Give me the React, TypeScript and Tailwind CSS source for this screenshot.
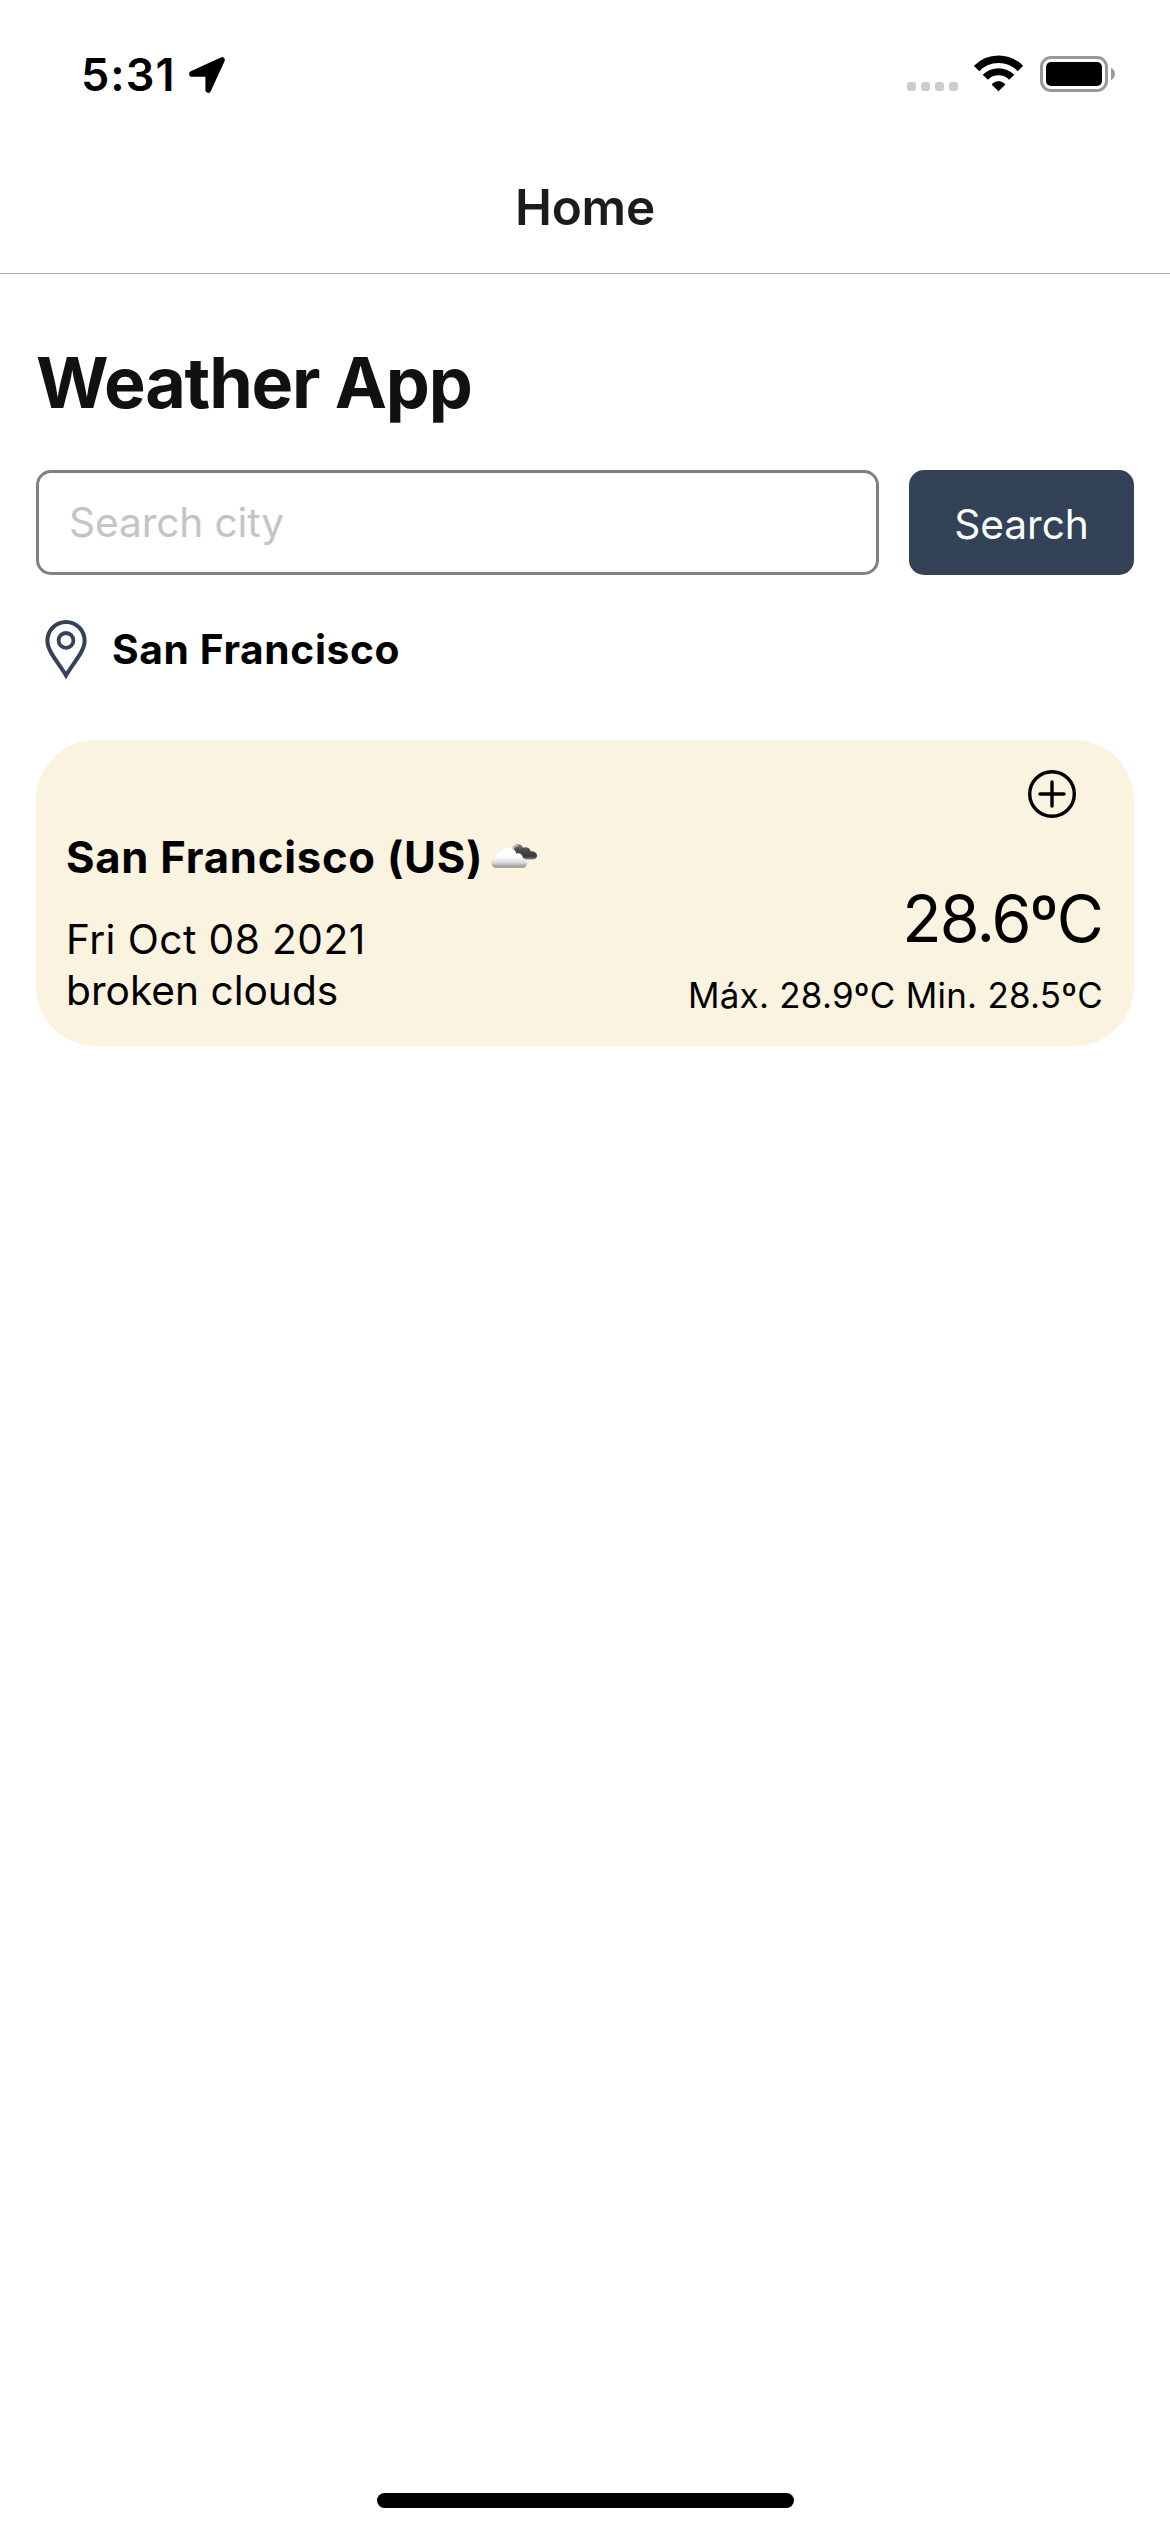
import React from "react";

function LocationArrow() {
  return (
    <svg width="36" height="36" viewBox="0 0 36 36" className="block">
      <path
        d="M2.9 16.9 L33 3 L19.2 33 V16.9 Z"
        fill="#000"
        stroke="#000"
        strokeWidth="5.6"
        strokeLinejoin="round"
      />
    </svg>
  );
}

function WifiIcon() {
  return (
    <svg width="49" height="37" viewBox="0 0 49 37" className="block" fill="none">
      <path d="M2.6 13.5 A30.4 30.4 0 0 1 46.4 13.5" stroke="#000" strokeWidth="7.6" />
      <path d="M11.3 22.3 A18.5 18.5 0 0 1 37.7 22.3" stroke="#000" strokeWidth="7.2" />
      <path
        d="M18 29.4 Q24.5 23.8 31 29.4 L24.5 35.8 Z"
        fill="#000"
        stroke="#000"
        strokeWidth="1"
        strokeLinejoin="round"
      />
    </svg>
  );
}

function Battery() {
  return (
    <div className="flex items-center">
      <div className="h-9 w-[68px] rounded-[11px] border-[3px] border-[#999] p-[3px]">
        <div className="h-full w-full rounded-[5px] bg-black" />
      </div>
      <svg width="4" height="12" viewBox="0 0 4 12" className="ml-[3px] block">
        <path d="M0 0 C2.6 1 4 3.4 4 6 C4 8.6 2.6 11 0 12 Z" fill="#999" />
      </svg>
    </div>
  );
}

function PinIcon() {
  return (
    <svg width="42" height="60" viewBox="0 0 42 60" className="block" fill="none" stroke="#334257">
      <path
        d="M21 2 C10.6 2 2.4 10.4 2.4 20.8 C2.4 31.5 13.5 42.5 21 55.4 C28.5 42.5 39.6 31.5 39.6 20.8 C39.6 10.4 31.4 2 21 2 Z"
        strokeWidth="4"
      />
      <circle cx="21" cy="20.4" r="7.4" strokeWidth="3.8" />
    </svg>
  );
}

function PlusIcon() {
  return (
    <svg width="48" height="48" viewBox="0 0 48 48" className="block" fill="none" stroke="#000">
      <circle cx="24" cy="24" r="22.3" strokeWidth="3.4" />
      <path d="M24 12 V36 M12 24 H36" strokeWidth="3.4" strokeLinecap="round" />
    </svg>
  );
}

function BrokenClouds() {
  return (
    <svg width="46" height="24" viewBox="0 0 46 24" className="block">
      <defs>
        <linearGradient id="light" x1="0" y1="3" x2="0" y2="24" gradientUnits="userSpaceOnUse">
          <stop offset="0" stopColor="#ffffff" />
          <stop offset="0.5" stopColor="#fbfbfb" />
          <stop offset="0.75" stopColor="#d9d9d9" />
          <stop offset="0.9" stopColor="#a6a6a6" />
          <stop offset="1" stopColor="#8a8a8a" />
        </linearGradient>
        <linearGradient id="dark" x1="0" y1="0" x2="0" y2="15.5" gradientUnits="userSpaceOnUse">
          <stop offset="0" stopColor="#8c8c8c" />
          <stop offset="0.35" stopColor="#4c4c4c" />
          <stop offset="0.8" stopColor="#3a3a3a" />
          <stop offset="1" stopColor="#8a8a8a" />
        </linearGradient>
      </defs>
      <path
        d="M21 6 C21.6 2 25 0 28 0.4 C30.2 0.6 31.6 2 32.2 3.8 C35 2.6 39 3.6 39.8 7.4 C43 7 46 8.8 46 11.4 C46 14 44.2 15.4 42 15.4 H27 Z"
        fill="url(#dark)"
      />
      <path d="M21.6 6.4 C22.4 3.4 24.6 1.6 27 1.6" stroke="#c9c6bd" strokeWidth="1.4" fill="none" />
      <path
        d="M5.6 23.8 C2.4 23.8 0.3 21.4 0.3 18.4 C0.3 15.4 2.4 13.2 5 12.8 C4.8 9.4 7 7.6 10 7.6 C11.4 4.6 14 3.4 17 3.6 C21.4 3.8 24.6 6 25.2 9.6 C28.8 8.6 32 10.6 31.8 14.2 C34.4 14.6 36.2 16.4 36.2 19 C36.2 21.8 34.2 23.8 31.4 23.8 Z"
        fill="url(#light)"
      />
    </svg>
  );
}

function StatusBar() {
  return (
    <div className="flex h-[141px] items-start justify-between pt-[55px] pr-[55px] pl-[81px]">
      <div className="flex">
        <span className="w-[108px] text-[45px] leading-[39px] font-semibold tracking-[1.04px]">5:31</span>
        <div className="pt-0.5">
          <LocationArrow />
        </div>
      </div>
      <div className="flex">
        <div className="mt-[27px] mr-4 flex gap-[5px]">
          <div className="size-[9px] rounded-[3px] bg-[#cccccc]" />
          <div className="size-[9px] rounded-[3px] bg-[#cccccc]" />
          <div className="size-[9px] rounded-[3px] bg-[#cccccc]" />
          <div className="size-[9px] rounded-[3px] bg-[#cccccc]" />
        </div>
        <WifiIcon />
        <div className="mt-px ml-[17px]">
          <Battery />
        </div>
      </div>
    </div>
  );
}

function WeatherCard() {
  return (
    <section className="mt-[60px] h-[306px] rounded-[60px] bg-[#faf3e0] p-[30px]">
      <div className="flex h-[61px] justify-end pr-7">
        <PlusIcon />
      </div>
      <div className="flex h-[185px] items-end justify-between">
        <div>
          <div className="mb-[29px] flex h-[54px] items-center">
            <h2 className="text-[43.6px] leading-[54px] font-bold tracking-[0.76px] whitespace-nowrap">
              San Francisco (US)
            </h2>
            <div className="mb-[5px] ml-2">
              <BrokenClouds />
            </div>
          </div>
          <p className="text-[40.7px] leading-[51px] tracking-[0.42px]">Fri Oct 08 2021</p>
          <p className="text-[40.7px] leading-[51px] tracking-[-0.02px]">broken clouds</p>
        </div>
        <div className="text-right">
          <p className="mr-[2px] mb-4 text-[64.5px] leading-[78px] tracking-[-1.87px]">28.6ºC</p>
          <p className="mr-px text-[34.9px] leading-[42px] tracking-[0.26px]">Máx. 28.9ºC Min. 28.5ºC</p>
        </div>
      </div>
    </section>
  );
}

export default function App() {
  return (
    <div className="flex h-[2532px] w-[1170px] flex-col bg-white font-['Inter',sans-serif] text-black">
      <StatusBar />
      <header className="flex h-[133px] items-center justify-center border-b border-[#b0b0b0]">
        <h1 className="text-[49.5px] leading-[60px] font-semibold tracking-[-0.17px] text-[#1c1c1e]">Home</h1>
      </header>
      <main className="flex-1 px-9 pt-[67px]">
        <h2 className="text-[70px] leading-[84px] font-bold tracking-[-1.2px] text-[#111111]">Weather App</h2>
        <div className="mt-[45px] flex h-[105px] gap-[30px]">
          <input
            type="text"
            placeholder="Search city"
            className="w-[843px] rounded-[15px] border-[3px] border-[#808080] px-[30px] text-[40.7px] tracking-[-0.14px] outline-none placeholder:text-[#c4c4c6]"
          />
          <button className="w-[225px] rounded-[15px] bg-[#334257] pt-[5px] text-[40.7px] leading-[50px] tracking-[-0.05px] text-white">
            Search
          </button>
        </div>
        <div className="mt-[45px] flex h-[60px] items-center pl-[9px]">
          <PinIcon />
          <span className="ml-[25px] text-[40.7px] leading-[50px] font-bold tracking-[0.63px]">San Francisco</span>
        </div>
        <WeatherCard />
      </main>
      <footer className="flex justify-center pb-6">
        <div className="h-[15px] w-[417px] rounded-full bg-black" />
      </footer>
    </div>
  );
}
